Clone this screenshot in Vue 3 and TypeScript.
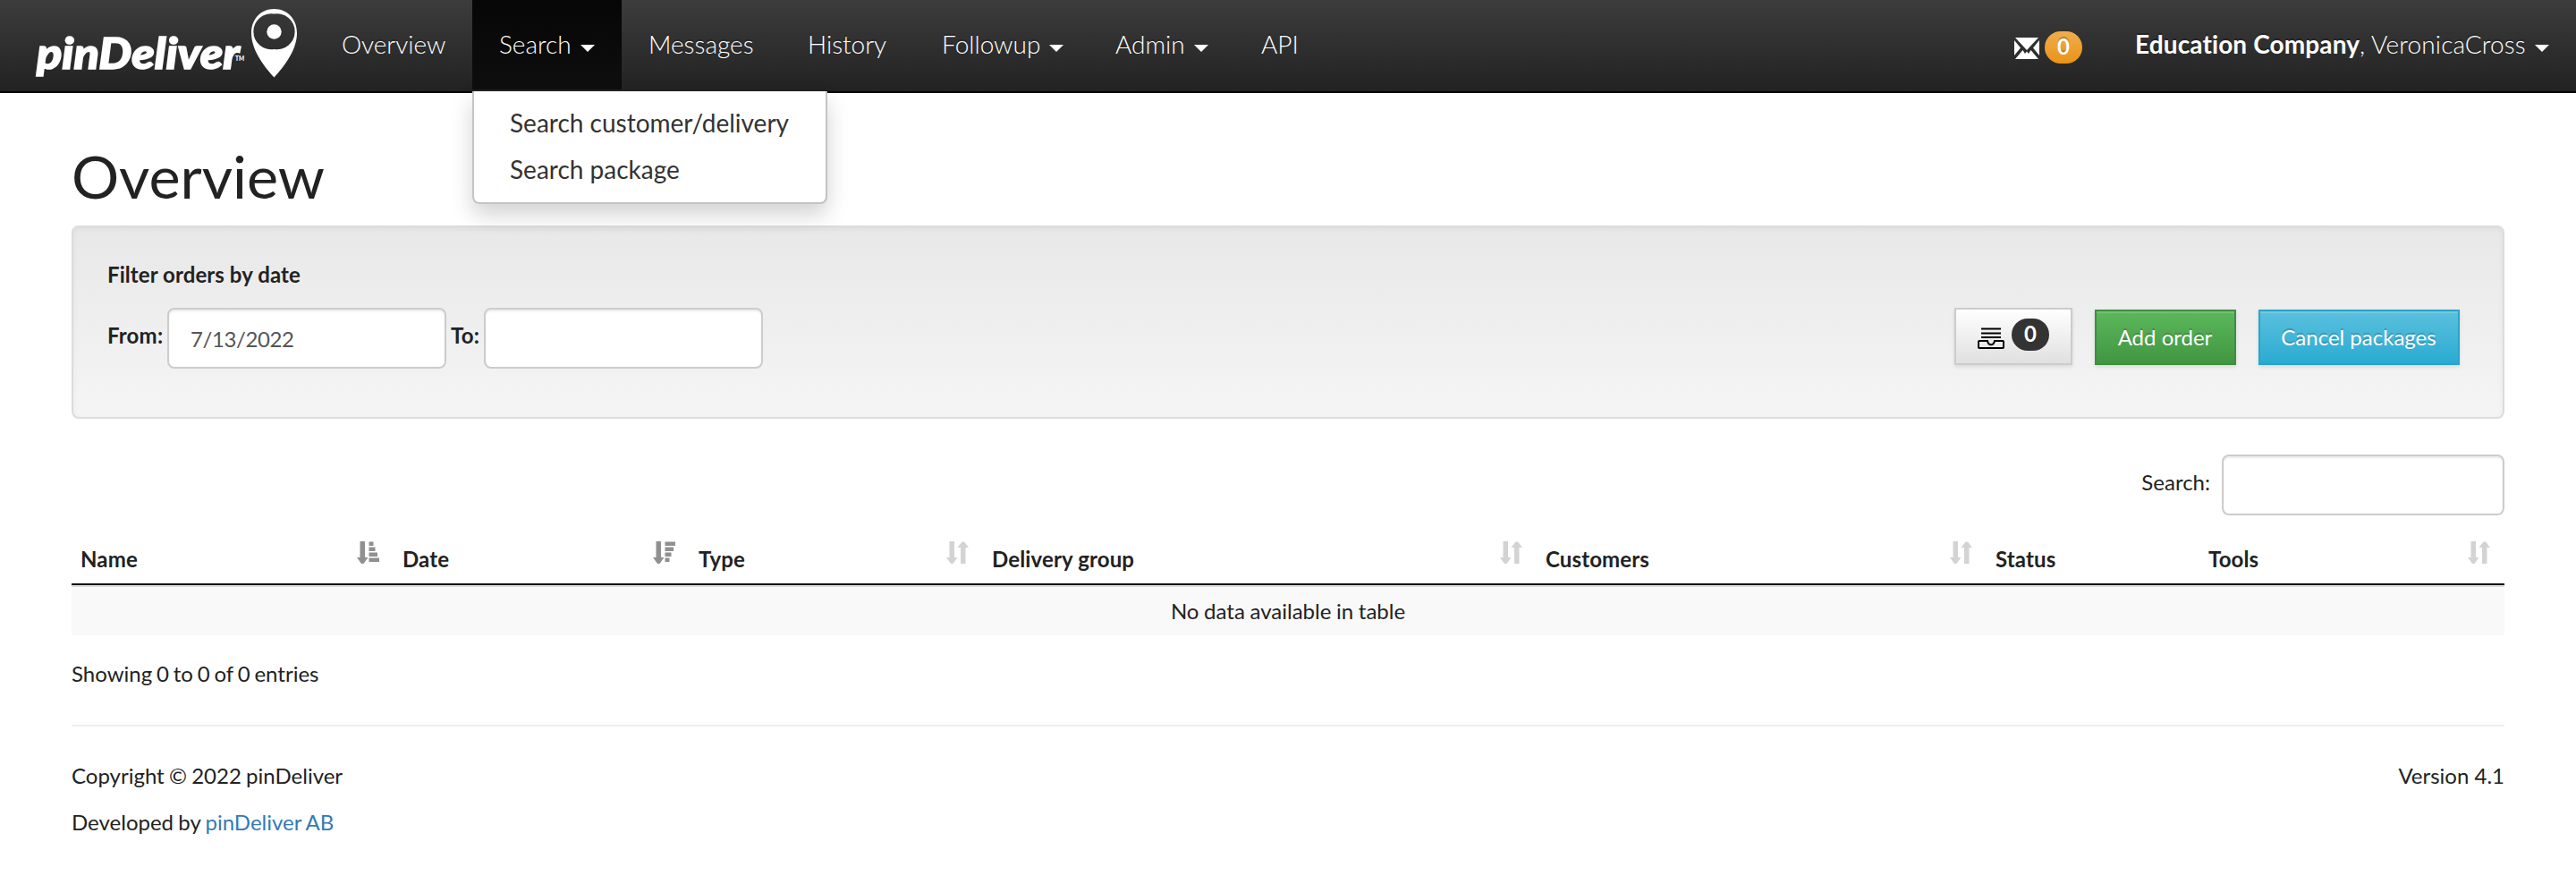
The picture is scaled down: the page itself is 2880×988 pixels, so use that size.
<script setup lang="ts">
interface NavItem { label: string; caret?: boolean; active?: boolean; cls: string }
interface Column { label: string; sort?: 'asc' | 'desc' | 'both'; cls: string }

const nav: NavItem[] = [
  { label: 'Overview', cls: 'overview' },
  { label: 'Search', caret: true, active: true, cls: 'search' },
  { label: 'Messages', cls: 'messages' },
  { label: 'History', cls: 'history' },
  { label: 'Followup', caret: true, cls: 'followup' },
  { label: 'Admin', caret: true, cls: 'admin' },
  { label: 'API', cls: 'api' },
]
const searchMenu: string[] = ['Search customer/delivery', 'Search package']
const columns: Column[] = [
  { label: 'Name', sort: 'asc', cls: 'c-name' },
  { label: 'Date', sort: 'desc', cls: 'c-date' },
  { label: 'Type', sort: 'both', cls: 'c-type' },
  { label: 'Delivery group', sort: 'both', cls: 'c-group' },
  { label: 'Customers', sort: 'both', cls: 'c-customers' },
  { label: 'Status', cls: 'c-status' },
  { label: 'Tools', sort: 'both', cls: 'c-tools' },
]
</script>

<template>
  <div class="page">
    <header class="navbar">
      <a class="brand">
        <svg class="logo" viewBox="0 0 300 96" width="300" height="96" role="img" aria-label="pinDeliver">
          <text class="word" x="1" y="77" textLength="227" lengthAdjust="spacingAndGlyphs">pinDeliver</text>
          <text class="tm" x="223" y="68" textLength="10" lengthAdjust="spacingAndGlyphs">TM</text>
          <path fill="#fff" fill-rule="evenodd" d="M266.500 10C281 10 292 21 292 37C292 57 276 76 266.500 86.500C257 76 241 57 241 37C241 21 252 10 266.500 10ZM266.500 15.500A20 20 0 1 0 266.500 55A20 20 0 1 0 266.500 15.500Z" />
          <circle cx="266.500" cy="35.500" r="8.200" fill="#fff" />
        </svg>
      </a>
      <nav class="menu">
        <div v-for="n in nav" :key="n.label" class="item" :class="[n.cls, { active: n.active }]">
          <span>{{ n.label }}</span><i v-if="n.caret" class="caret"></i>
          <ul v-if="n.active" class="dropdown">
            <li v-for="s in searchMenu" :key="s">{{ s }}</li>
          </ul>
        </div>
      </nav>
      <div class="account">
        <svg class="mail" viewBox="0 0 28 24" width="28" height="24">
          <g fill="#fff"><path d="M1 0H27L14 14Z" /><path d="M0 3L7 11.500L0 20Z" /><path d="M28 3L21 11.500L28 20Z" /><path d="M1 24L9.500 14L12 18L14 15.500L16 18L18.500 14L27 24Z" /></g>
        </svg>
        <span class="badge orange">0</span>
        <span class="user"><b>Education Company</b>, VeronicaCross</span><i class="caret"></i>
      </div>
    </header>

    <main class="content">
      <h1>Overview</h1>
      <section class="well">
        <div class="filter-title">Filter orders by date</div>
        <div class="filter">
          <label>From:</label><input class="from" type="text" value="7/13/2022" />
          <label class="to-label">To:</label><input type="text" />
          <div class="buttons">
            <button class="btn tray">
              <svg viewBox="0 0 30 24" width="30" height="24" fill="none" stroke="#000" stroke-width="2">
                <path d="M4 1.500H26M4 6.500H26M4 11H26" />
                <path d="M2 15H11C11.500 18 13 19.300 15 19.300S18.500 18 19 15H28Q29 15 29 16V22Q29 23 28 23H2Q1 23 1 22V16Q1 15 2 15Z" />
              </svg>
              <span class="badge dark">0</span>
            </button>
            <button class="btn add">Add order</button>
            <button class="btn cancel">Cancel packages</button>
          </div>
        </div>
      </section>

      <div class="table-search"><label>Search:</label><input type="text" /></div>

      <table>
        <thead>
          <tr>
            <th v-for="c in columns" :key="c.label" :class="c.cls">
              <div class="th">
                <span>{{ c.label }}</span>
                <svg v-if="c.sort" class="sort" :class="c.sort" viewBox="0 0 26 26" width="26" height="26">
                  <path d="M3.500 0H9V18H12.500L7.500 25H5L0 18H3.500Z" />
                  <path v-if="c.sort === 'both'" d="M16 25V7H12.500L17.500 .5H20L25 7H21.500V25Z" />
                  <path v-else-if="c.sort === 'asc'" d="M13.500 .5H18.500V5H13.500ZM13.500 6.500H20.500V11H13.500ZM13.500 12.500H23V17H13.500ZM13.500 18.500H25V23H13.500Z" />
                  <path v-else d="M13.500 .5H25V5H13.500ZM13.500 6.500H23V11H13.500ZM13.500 12.500H20.500V17H13.500ZM13.500 18.500H18.500V23H13.500Z" />
                </svg>
              </div>
            </th>
          </tr>
        </thead>
        <tbody>
          <tr><td colspan="7">No data available in table</td></tr>
        </tbody>
      </table>
      <div class="info">Showing 0 to 0 of 0 entries</div>

      <footer>
        <div class="row"><span>Copyright © 2022 pinDeliver</span><span>Version 4.1</span></div>
        <div class="row"><span>Developed by <a>pinDeliver AB</a></span></div>
      </footer>
    </main>
  </div>
</template>

<style>
body { margin: 0; background: #fff; }
</style>

<style scoped>
* { box-sizing: border-box; }
.page { width: 2880px; height: 988px; overflow: hidden; font-family: Lato, "Open Sans", sans-serif; font-size: 24px; line-height: 36px; color: #222; background: #fff; }
.navbar { height: 104px; display: flex; justify-content: space-between; background: linear-gradient(#3c3c3c, #222); border-bottom: 2px solid #000; color: #fff; font-size: 28px; font-weight: 300; text-shadow: 0 -2px 0 rgba(0, 0, 0, .25); }
.brand { width: 353px; padding-left: 40px; }
.logo { display: block; overflow: visible; text-shadow: none; }
.word { font: italic 900 48px Lato, sans-serif; fill: #fff; stroke: #fff; stroke-width: 1.6px; }
.tm { font: 900 8px Lato, sans-serif; fill: #fff; }
.menu { display: flex; flex: 1; }
.item { position: relative; height: 100px; padding: 0 30px; display: flex; align-items: center; line-height: 98px; white-space: nowrap; }
.item > span { height: 100px; }
.item.active { background: linear-gradient(#060606, #0e0e0e); }
.item.overview { width: 175px; padding-left: 29px; }
.item.search { width: 167px; }
.item.messages { width: 178px; }
.item.history { width: 150px; }
.item.followup { width: 194px; }
.item.admin { width: 162px; }
.item.api { padding-left: 31px; }
.caret { display: inline-block; margin: 8px 0 0 10px; border: 8px solid transparent; border-top-color: #fff; border-bottom: 0; }
.dropdown { position: absolute; z-index: 5; left: 0; top: 102px; width: 397px; height: 126px; margin: 0; padding: 9px 0 0; list-style: none; color: #333; background: #fff; border: 2px solid #c4c4c4; border-top: 0; border-radius: 0 0 8px 8px; box-shadow: 0 12px 24px rgba(0, 0, 0, .175); font-weight: 400; text-shadow: none; }
.dropdown li { height: 52px; line-height: 52px; padding-left: 40px; }
.account { display: flex; align-items: center; height: 100px; padding-right: 30px; white-space: nowrap; }
.user { width: 437px; height: 100px; line-height: 98px; letter-spacing: .12px; }
.user b { font-weight: 700; }
.mail { margin-top: 8px; }
.badge { display: inline-flex; align-items: center; justify-content: center; width: 42px; height: 36px; border-radius: 20px; color: #fff; font-size: 24px; font-weight: 700; line-height: 34px; padding-bottom: 2px; }
.badge.orange { margin: 6px 59px 0 6px; background: linear-gradient(#f0ad4e, #eb9316); }
.badge.dark { background: #333; }
.content { padding: 0 80px; }
h1 { margin: 0; height: 148px; padding-top: 52px; font-size: 66.500px; line-height: 80px; font-weight: 400; }
.well { height: 216px; padding: 35px 48px 0 38px; border: 2px solid #dcdcdc; border-radius: 8px; background: linear-gradient(#e8e8e8, #f5f5f5); box-shadow: inset 0 2px 6px rgba(0, 0, 0, .05); font-weight: 700; }
.filter-title { height: 55px; letter-spacing: .08px; }
.filter { display: flex; align-items: flex-start; height: 68px; }
.filter label { width: 67px; padding-top: 13px; letter-spacing: .2px; }
.filter .to-label { width: 37px; margin-left: 5px; }
input { width: 312px; height: 68px; padding: 0 24px; border: 2px solid #ccc; border-radius: 8px; background: #fff; box-shadow: inset 0 2px 2px rgba(0, 0, 0, .075); font: 24px Lato, sans-serif; color: #555; letter-spacing: -.4px; }
.buttons { display: flex; align-items: flex-end; height: 64px; margin-left: auto; gap: 25px; }
.btn { padding: 0 1px 2px 0; height: 62px; border: 2px solid; border-radius: 0; color: #fff; font: 24px Lato, sans-serif; text-shadow: 0 -2px 0 rgba(0, 0, 0, .2); box-shadow: inset 0 2px 0 rgba(255, 255, 255, .15), 0 2px 4px rgba(0, 0, 0, .1); }
.tray { width: 132px; height: 64px; padding: 0 0 4px; display: flex; align-items: center; justify-content: center; gap: 8px; border-color: #ccc; background: linear-gradient(#fff, #e0e0e0); text-shadow: none; }
.tray svg { margin-top: 8px; }
.add { width: 158px; border-color: #3e8f3e; background: linear-gradient(#5cb85c, #419641); }
.cancel { width: 225px; border-color: #28a4c9; background: linear-gradient(#5bc0de, #2aabd2); }
.table-search { display: flex; justify-content: flex-end; height: 68px; margin-top: 40px; }
.table-search label { padding-top: 13px; margin-right: 13px; }
.table-search input { width: 316px; }
table { width: 2720px; margin-top: 20px; border-collapse: separate; border-spacing: 0; table-layout: fixed; }
th { height: 58px; padding: 0 15px 0 10px; border-bottom: 2px solid #111; text-align: left; font-weight: 700; }
.th { display: flex; justify-content: space-between; height: 56px; }
.th span { padding-top: 11px; letter-spacing: .14px; }
.sort { margin-top: 9px; fill: #d3d3d3; }
.sort.asc, .sort.desc { fill: #909090; }
.c-name { width: 360px; }
.c-date { width: 331px; }
.c-type { width: 328px; }
.c-group { width: 619px; }
.c-customers { width: 503px; }
.c-status { width: 238px; }
td { height: 56px; padding: 0; border-top: 2px solid #ddd; background: #f9f9f9; text-align: center; word-spacing: -.5px; }
.info { height: 100px; padding-top: 25px; word-spacing: -1.300px; }
footer { border-top: 2px solid #eee; padding-top: 29px; }
.row { display: flex; justify-content: space-between; height: 52px; line-height: 51px; }
.row span:first-child { word-spacing: -.9px; }
.row a { color: #337ab7; }
</style>
